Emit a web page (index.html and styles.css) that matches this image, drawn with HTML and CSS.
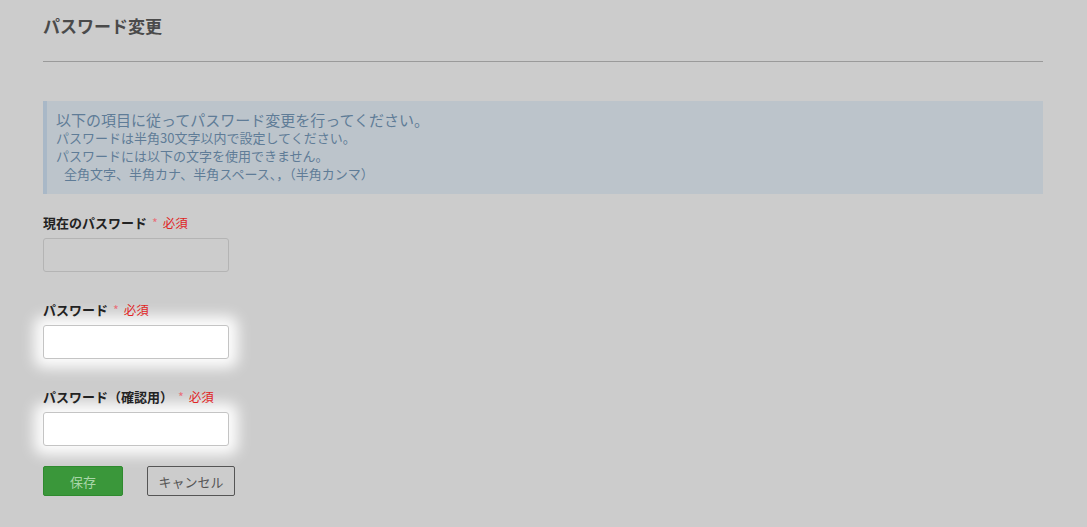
FILE: index.html
```html
<!DOCTYPE html>
<html lang="ja">
    <head>
        <meta charset="UTF-8" />
        <meta name="viewport" content="width=device-width, initial-scale=1.0" />
        <title>パスワード変更</title>
        <link rel="stylesheet" href="styles.css">
    </head>
    <body>
        <div class="page">
            <h2 class="page-title">パスワード変更</h2>
            <hr class="divider" />

            <div class="notice">
                <p class="notice-lead">以下の項目に従ってパスワード変更を行ってください。</p>
                <p>パスワードは半角30文字以内で設定してください。</p>
                <p>パスワードには以下の文字を使用できません。</p>
                <p class="indent">全角文字、半角カナ、半角スペース、，（半角カンマ）</p>
            </div>

            <form class="form">
                <div class="field">
                    <label class="field-label">現在のパスワード<span class="req"><span class="star">*</span>必須</span></label>
                    <input type="password" class="input input-dim" />
                </div>
                <div class="field">
                    <label class="field-label">パスワード<span class="req"><span class="star">*</span>必須</span></label>
                    <input type="password" class="input input-lit" />
                </div>
                <div class="field">
                    <label class="field-label">パスワード（確認用）<span class="req"><span class="star">*</span>必須</span></label>
                    <input type="password" class="input input-lit" />
                </div>
                <div class="actions">
                    <button type="button" class="btn btn-save">保存</button>
                    <button type="button" class="btn btn-cancel">キャンセル</button>
                </div>
            </form>
        </div>
    </body>
</html>
```

FILE: styles.css
```css
body,
html {
    margin: 0;
    padding: 0;
    height: 100%;
    overflow: hidden;
}

body {
    background: #cccccc;
    font-family: "Noto Sans CJK JP", "Noto Sans", sans-serif;
    color: #222222;
}

.page {
    width: 1000px;
    padding-left: 43px;
}

.page-title {
    margin: 0;
    padding-top: 14px;
    font-size: 17px;
    line-height: 24px;
    font-weight: bold;
    color: #4a4a4a;
}

.divider {
    margin: 23px 0 0;
    border: 0;
    border-top: 1px solid #9a9a9a;
}

.notice {
    margin-top: 39px;
    padding: 9px 10px 11px 9px;
    background: #bcc4cb;
    border-left: 4px solid #a9b8c7;
    color: #5f7c97;
}

.notice p {
    margin: 0;
    font-size: 13px;
    line-height: 18px;
}

.notice .notice-lead {
    font-size: 15px;
    line-height: 19px;
}

.notice .indent {
    padding-left: 8px;
}

.form {
    margin-top: 20px;
}

.field {
    margin-bottom: 29px;
}

.field-label {
    display: block;
    margin-bottom: 6px;
    font-size: 13px;
    line-height: 18px;
    font-weight: bold;
    color: #222222;
}

.req {
    margin-left: 5px;
    font-size: 12.5px;
    font-weight: normal;
    color: #e02424;
}

.star {
    margin-right: 5px;
    color: #e8707a;
}

.input {
    display: block;
    box-sizing: border-box;
    width: 186px;
    height: 34px;
    margin: 0;
    border: 1px solid #c4c4c4;
    border-radius: 3px;
    outline: none;
}

.input-dim {
    background: #cccccc;
    border-color: #b4b4b4;
}

.input-lit {
    background: #ffffff;
    box-shadow: 0 0 14px 9px rgba(255, 255, 255, 0.95);
}

.actions {
    display: flex;
    gap: 24px;
    margin-top: -9px;
}

.btn {
    box-sizing: border-box;
    height: 30px;
    border-radius: 2px;
    font-family: inherit;
    font-size: 13px;
    cursor: pointer;
}

.btn-save {
    width: 80px;
    background: #3a973a;
    border: 1px solid #2f8a2f;
    color: #a9d6a9;
}

.btn-cancel {
    width: 88px;
    background: transparent;
    border: 1px solid #555555;
    color: #555555;
}
```
